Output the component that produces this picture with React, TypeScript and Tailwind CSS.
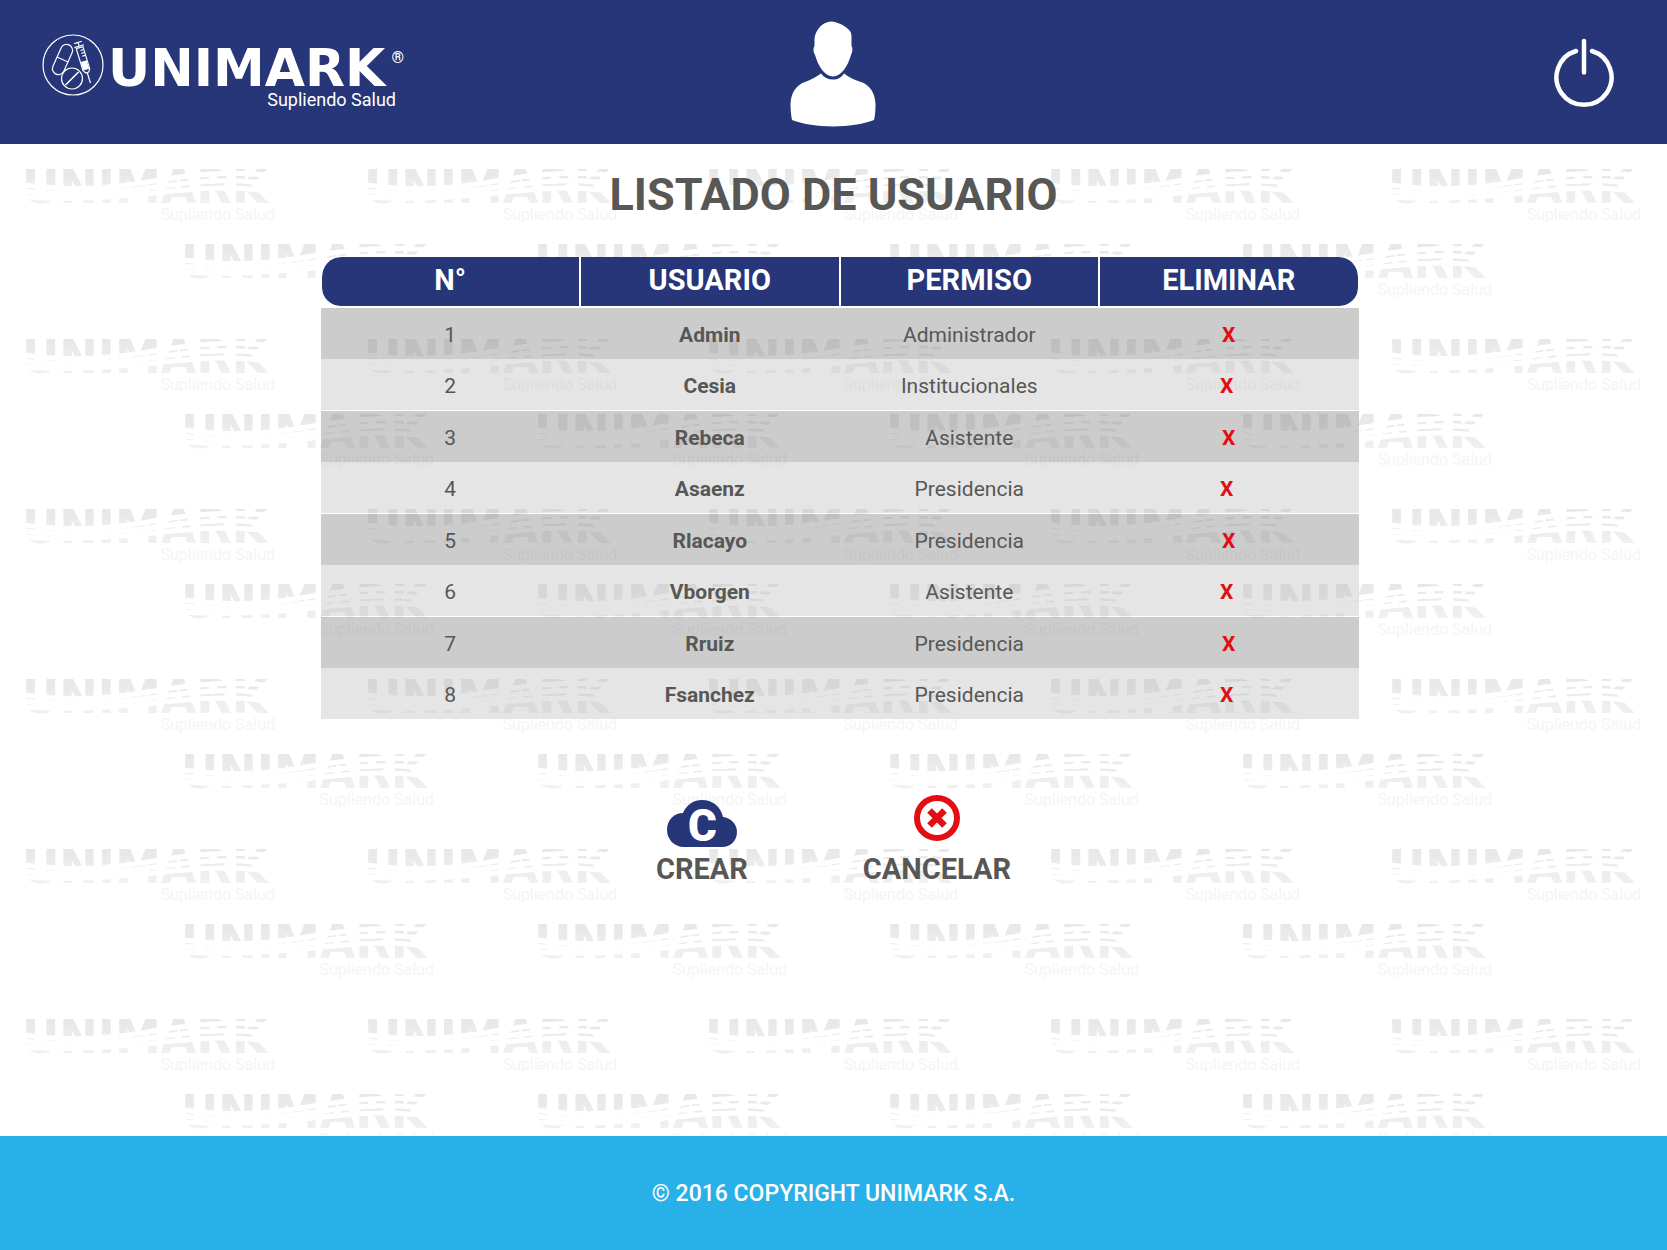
import React from "react";

const users = [
  { id: 1, name: "Admin", role: "Administrador" },
  { id: 2, name: "Cesia", role: "Institucionales" },
  { id: 3, name: "Rebeca", role: "Asistente" },
  { id: 4, name: "Asaenz", role: "Presidencia" },
  { id: 5, name: "Rlacayo", role: "Presidencia" },
  { id: 6, name: "Vborgen", role: "Asistente" },
  { id: 7, name: "Rruiz", role: "Presidencia" },
  { id: 8, name: "Fsanchez", role: "Presidencia" },
];

const columns = ["N°", "USUARIO", "PERMISO", "ELIMINAR"];

function LogoBadge() {
  return (
    <svg viewBox="0 0 62 62" className="h-[62px] w-[62px] shrink-0" fill="none" stroke="#fff" strokeWidth="1.2" aria-hidden="true">
      <circle cx="31" cy="31" r="30" />
      <g transform="rotate(24 20.5 25.5)">
        <rect x="14.5" y="9.5" width="12" height="32" rx="6" />
        <path d="M14.5 25.500h12" />
      </g>
      <circle cx="30" cy="44.500" r="10.5" />
      <path d="M23.500 51 36.500 38" strokeWidth="1.6" />
      <g transform="rotate(-17 42 28)">
        <path d="M38 7.500h8M42 7.500v4M37 11.500h10M38.500 13v23l2 3h3l2-3v-23zM42 39v11" />
        <path d="M42 16h3M42 19h3M42 22h3" />
        <path d="M39 27h6v9h-6z" fill="#fff" stroke="none" />
      </g>
    </svg>
  );
}

function Logo() {
  return (
    <a href="#" aria-label="Unimark" className="flex items-start gap-1 text-white">
      <LogoBadge />
      <span className="relative flex w-[288px] flex-col pt-4">
        <span className="font-['DejaVu_Sans'] text-[52px] leading-9 font-bold">UNIMARK</span>
        <span className="absolute top-3 -right-2 text-base leading-6 font-bold">®</span>
        <span className="self-end pt-0.5 font-[Roboto,sans-serif] text-lg leading-6">Supliendo Salud</span>
      </span>
    </a>
  );
}

function WatermarkDefs() {
  return (
    <svg className="absolute h-0 w-0" aria-hidden="true">
      <defs>
        <linearGradient id="wmFade" x1="0" y1="0" x2="0" y2="1">
          <stop offset="0" stopColor="#e5e5e5" />
          <stop offset="1" stopColor="#f3f3f3" />
        </linearGradient>
        <mask id="wmWaves" maskUnits="userSpaceOnUse" x="0" y="0" width="260" height="60">
          <rect width="260" height="60" fill="#fff" />
          <g fill="none" stroke="#000">
            <path d="M0 17C50 24 90 20 130 13S210 2 260 9" strokeWidth="5" />
            <path d="M0 23C50 29 100 24 140 18S215 10 260 18" strokeWidth="5" />
            <path d="M0 29C60 33 110 27 150 23S220 18 260 26" strokeWidth="5" />
          </g>
        </mask>
      </defs>
    </svg>
  );
}

function Watermark() {
  return (
    <svg viewBox="0 0 250 58" className="h-[58px] w-[250px] shrink-0 overflow-visible">
      <text x="-2" y="35" fontFamily="DejaVu Sans" fontWeight="700" fontSize="46" fill="url(#wmFade)" mask="url(#wmWaves)">
        UNIMARK
      </text>
      <text x="251" y="52" textAnchor="end" fontFamily="Roboto" fontSize="16" fill="#f5f5f5">
        Supliendo Salud
      </text>
    </svg>
  );
}

function Backdrop() {
  return (
    <div aria-hidden="true" className="absolute inset-0 overflow-hidden pt-6 select-none">
      <WatermarkDefs />
      {[0, 1, 2, 3, 4, 5].map((band) => (
        <div key={band} className="flex h-[170px] flex-col gap-[17px]">
          <div className="flex justify-between pr-[27px] pl-6">
            {[0, 1, 2, 3, 4].map((n) => (
              <Watermark key={n} />
            ))}
          </div>
          <div className="flex justify-between pr-44 pl-[183px]">
            {[0, 1, 2, 3].map((n) => (
              <Watermark key={n} />
            ))}
          </div>
        </div>
      ))}
    </div>
  );
}

const cell =
  "border-white/50 bg-clip-padding p-0 pt-0.5 group-odd:bg-[#7f7f7f]/40 group-even:border-b group-even:bg-[#b5b5b5]/35";

function UserTable() {
  return (
    <table className="w-full table-fixed border-separate border-spacing-0 text-center text-[#575756]">
      <thead>
        <tr>
          {columns.map((label) => (
            <th
              key={label}
              scope="col"
              className="h-[51px] border-x border-b-2 border-white bg-[#263678] bg-clip-padding pb-1 text-[29px] leading-8 font-bold text-white first:rounded-l-[20px] last:rounded-r-[20px]"
            >
              {label}
            </th>
          ))}
        </tr>
      </thead>
      <tbody className="text-[21px] leading-7">
        {users.map((user) => (
          <tr key={user.id} className="group h-[51px] even:h-[52px]">
            <td className={cell}>{user.id}</td>
            <td className={`${cell} font-bold`}>{user.name}</td>
            <td className={cell}>{user.role}</td>
            <td className={`${cell} group-even:pr-1`}>
              <button type="button" aria-label={`Eliminar ${user.name}`} className="cursor-pointer font-bold text-[#e30d13]">
                X
              </button>
            </td>
          </tr>
        ))}
      </tbody>
    </table>
  );
}

export default function App() {
  return (
    <div className="flex min-h-screen flex-col bg-white font-[Roboto,sans-serif]">
      <header className="grid h-36 grid-cols-3 bg-[#263678] px-[42px]">
        <div className="pt-[34px]">
          <Logo />
        </div>
        <button type="button" aria-label="Usuario" className="mt-5 h-[108px] w-[86px] cursor-pointer justify-self-center">
          <svg viewBox="0 0 86 108" className="h-full w-full" fill="#fff">
            <path d="M24.500 26V18C26 9 33 2 41 1.500C48 2 56 6 60 11C61.500 13 61.500 15 61.500 18V26C63 28 62.500 32 61 35C57.500 47 51 56.500 43 56.500S28.500 47 25 35C23 32 23 28 24.500 26Z" />
            <path d="M31 53.500C34 57.500 38 59.500 43 59.500S51 57.500 54 53.500C60 58 65 60 71 62C80 65 85 73 85.500 84C85.500 91 85 96 84 100C62 108.500 24 108.500 2 100C1 95 .500 90 .500 84C1 73 6 65 15 62C21 60 26 57 31 53.500Z" />
          </svg>
        </button>
        <button type="button" aria-label="Salir" className="mt-[38px] mr-[11px] h-[70px] w-[60px] cursor-pointer justify-self-end">
          <svg viewBox="0 0 60 70" className="h-full w-full" fill="none" stroke="#fff" strokeWidth="4.5" strokeLinecap="round">
            <path d="M30 3V34.500M22 13A27.500 27.500 0 1 0 38 13" />
          </svg>
        </button>
      </header>

      <main className="relative flex-1">
        <Backdrop />
        <div className="relative flex flex-col items-center pt-[25px]">
          <h1 className="text-[45px] leading-[52px] font-bold text-[#575756]">LISTADO DE USUARIO</h1>
          <div className="mt-9 w-full max-w-[1050px] pl-3">
            <UserTable />
          </div>
          <div className="mt-[75px] flex items-end gap-[115px] text-[29px] leading-8 font-bold text-[#575756]">
            <button type="button" className="flex cursor-pointer flex-col items-center gap-1.5">
              <svg viewBox="0 0 70 47" className="h-[47px] w-[70px]" aria-hidden="true">
                <path
                  d="M17 47C7 47 0 39 0 30C0 20 7 13 16 13C20 4 27 0 35 0C46 0 54 7 56 17C64 18 70 24 70 32C70 41 63 47 55 47Z"
                  fill="#263678"
                />
                <text x="35.500" y="41" textAnchor="middle" fontFamily="Roboto" fontWeight="900" fontSize="44" fill="#fff">
                  C
                </text>
              </svg>
              CREAR
            </button>
            <button type="button" className="flex cursor-pointer flex-col items-center gap-3">
              <svg viewBox="0 0 46 46" className="h-[46px] w-[46px]" fill="none" stroke="#e30d13" aria-hidden="true">
                <circle cx="23" cy="23" r="20" strokeWidth="6" />
                <path d="M15.500 15.500l15 15M30.500 15.500l-15 15" strokeWidth="6.5" />
              </svg>
              CANCELAR
            </button>
          </div>
        </div>
      </main>

      <footer className="relative flex h-[114px] items-center justify-center bg-[#28b0e8] pt-0.5 text-[23px] font-medium text-white">
        © 2016 COPYRIGHT UNIMARK S.A.
      </footer>
    </div>
  );
}
